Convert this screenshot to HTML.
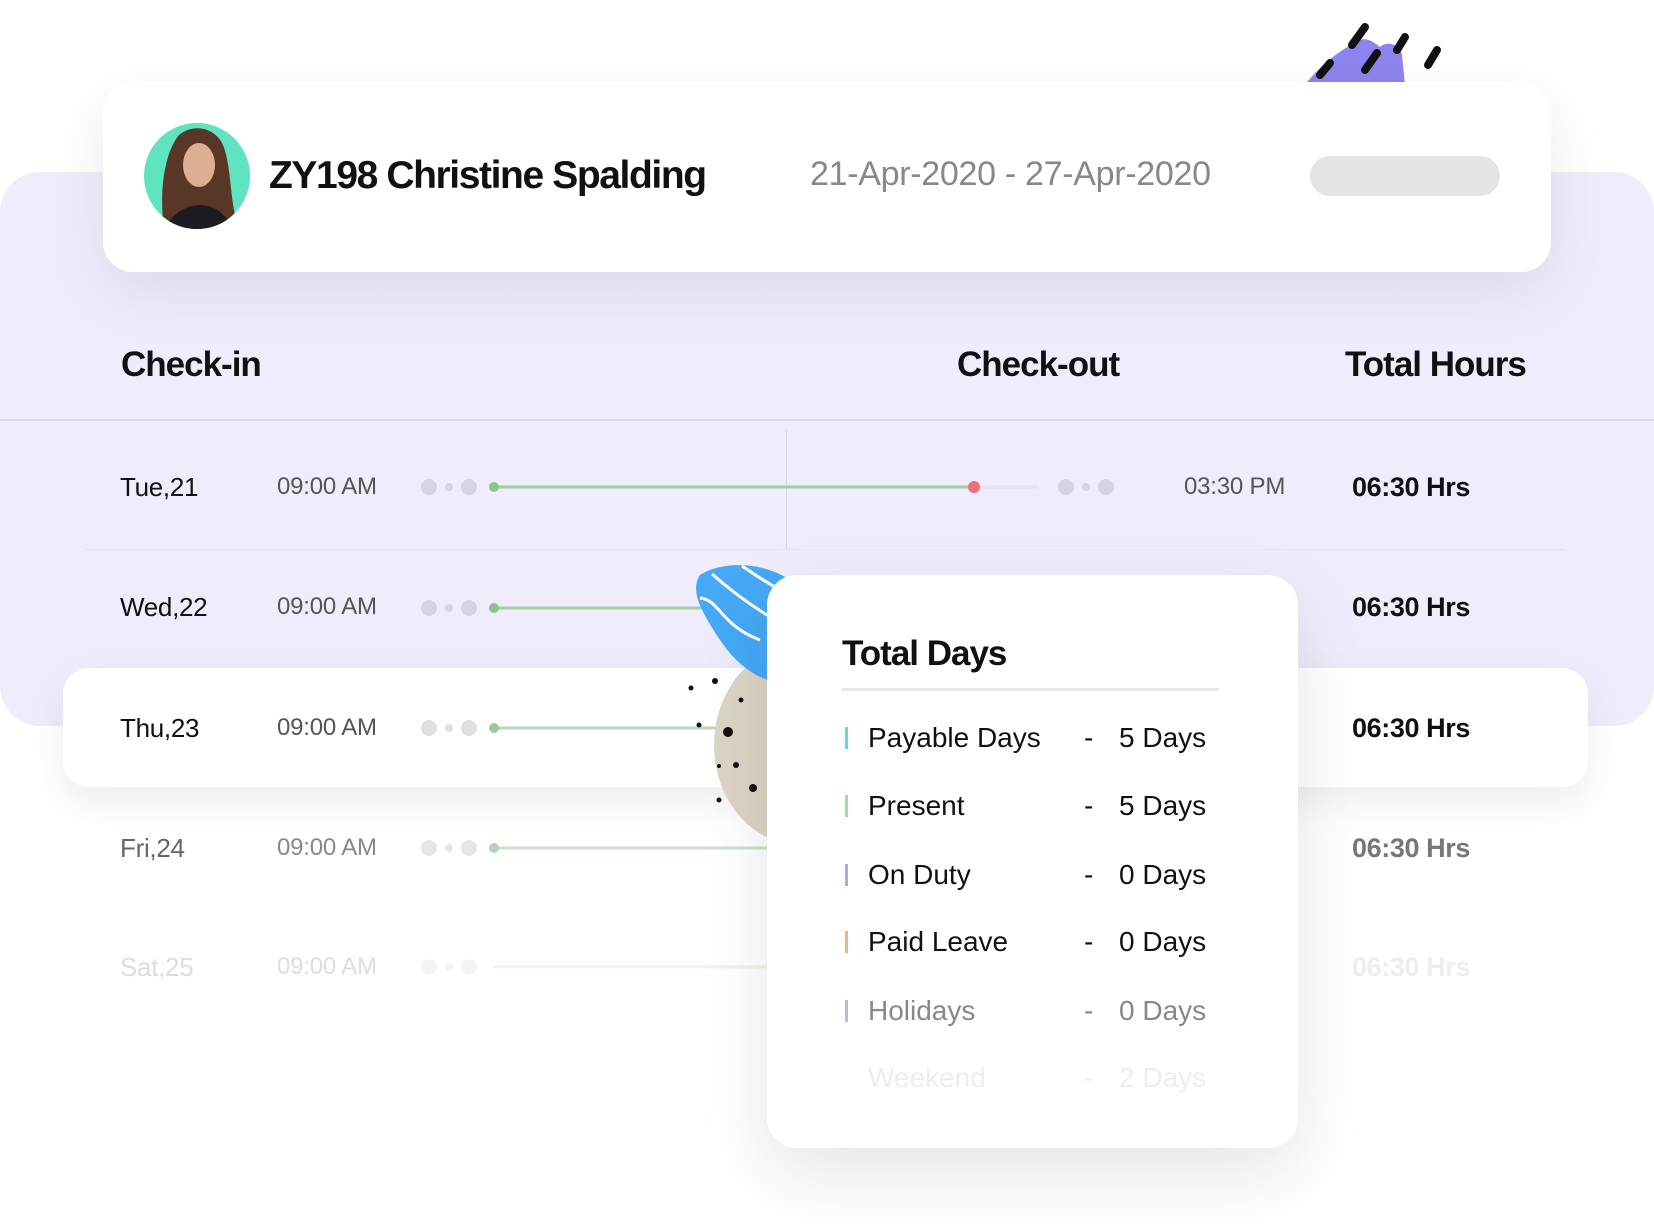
<!DOCTYPE html>
<html><head><meta charset="utf-8"><style>
*{margin:0;padding:0;box-sizing:border-box}
body{width:1654px;height:1231px;background:#fff;position:relative;overflow:hidden;font-family:"Liberation Sans",sans-serif;color:#111}
.a{position:absolute;white-space:nowrap}
.band{left:0;top:172px;width:1654px;height:554px;background:#efedfb;border-radius:40px}
.card{left:103px;top:82px;width:1448px;height:190px;background:#fff;border-radius:30px;box-shadow:0 20px 60px rgba(0,0,0,.08)}
.h{font-size:35px;font-weight:bold;letter-spacing:-1px;line-height:40px}
.day{font-size:26px;left:120px;line-height:30px;letter-spacing:-.3px}
.tm{font-size:24px;left:277px;color:#555;line-height:30px;letter-spacing:-.2px}
.hr{font-size:27px;left:1352px;font-weight:bold;line-height:30px;letter-spacing:-.4px}
.it{font-size:28px;line-height:34px;letter-spacing:0}
.bar{position:absolute;width:3px;height:22px;left:845px}
</style></head><body>
<div class="a band"></div>
<svg class="a" style="left:1290px;top:15px" width="200" height="70" viewBox="0 0 200 70">
<path d="M15 70 C30 50 50 35 70 25 C78 22 85 28 90 32 C96 26 110 28 112 40 L115 70 Z" fill="#8f83ef"/>
<g stroke="#111" stroke-width="8" stroke-linecap="round">
<line x1="62" y1="30" x2="75" y2="12"/><line x1="75" y1="55" x2="87" y2="38"/><line x1="30" y1="60" x2="40" y2="48"/>
<line x1="107" y1="35" x2="115" y2="22"/><line x1="138" y1="50" x2="147" y2="35"/></g></svg>
<div class="a card"></div>
<svg class="a" style="left:144px;top:123px" width="106" height="106" viewBox="0 0 106 106">
<defs><clipPath id="c"><circle cx="53" cy="53" r="53"/></clipPath></defs>
<g clip-path="url(#c)"><rect width="106" height="106" fill="#5fe3c0"/>
<path d="M20 106 C15 70 20 30 35 12 C50 0 70 5 78 20 C88 40 85 80 95 106Z" fill="#5a3626"/>
<ellipse cx="55" cy="42" rx="16" ry="22" fill="#dcae94"/>
<path d="M20 106 C30 88 45 82 55 82 C70 82 82 90 88 106Z" fill="#1d1b22"/></g></svg>
<div class="a" style="left:269px;top:153px;font-size:39px;font-weight:bold;letter-spacing:-1.4px;line-height:46px">ZY198 Christine Spalding</div>
<div class="a" style="left:810px;top:154px;font-size:34px;color:#888;letter-spacing:-.3px;line-height:40px">21-Apr-2020 - 27-Apr-2020</div>
<div class="a" style="left:1310px;top:156px;width:190px;height:40px;border-radius:20px;background:#e4e4e4"></div>

<div class="a h" style="left:121px;top:345px">Check-in</div>
<div class="a h" style="left:957px;top:345px">Check-out</div>
<div class="a h" style="left:1345px;top:345px">Total Hours</div>
<div class="a" style="left:0;top:419px;width:1654px;height:2px;background:#d9d7e8"></div>
<div class="a" style="left:786px;top:430px;width:1px;height:120px;background:#d9d7e8"></div>
<div class="a" style="left:85px;top:549px;width:1480px;height:1px;background:#e6e4f3"></div>

<div class="a" style="left:63px;top:668px;width:1525px;height:119px;background:#fff;border-radius:26px;box-shadow:0 15px 40px rgba(0,0,0,.07)"></div>

<div class="a day" style="top:472px">Tue,21</div><div class="a tm" style="top:472px">09:00 AM</div><div class="a tm" style="top:472px;left:1184px">03:30 PM</div><div class="a hr" style="top:472px">06:30 Hrs</div>
<div class="a day" style="top:592px">Wed,22</div><div class="a tm" style="top:592px">09:00 AM</div><div class="a hr" style="top:592px">06:30 Hrs</div>
<div class="a day" style="top:713px">Thu,23</div><div class="a tm" style="top:713px">09:00 AM</div><div class="a hr" style="top:713px">06:30 Hrs</div>
<div class="a day" style="top:833px;color:#666">Fri,24</div><div class="a tm" style="top:833px;color:#888">09:00 AM</div><div class="a hr" style="top:833px;color:#777">06:30 Hrs</div>
<div class="a day" style="top:952px;color:#ddd">Sat,25</div><div class="a tm" style="top:952px;color:#ddd">09:00 AM</div><div class="a hr" style="top:952px;color:#eee">06:30 Hrs</div>

<svg class="a" style="left:0;top:0" width="1654" height="1231">
<circle cx="429" cy="487" r="8" fill="#d6d4e2"/><circle cx="449" cy="487" r="4" fill="#d6d4e2"/><circle cx="469" cy="487" r="8" fill="#d6d4e2"/>
<line x1="494" y1="487" x2="974" y2="487" stroke="#a3cfa2" stroke-width="3"/><circle cx="494" cy="487" r="5" fill="#8fc28e"/>
<line x1="974" y1="487" x2="1039" y2="487" stroke="#e6e4f0" stroke-width="3"/><circle cx="974" cy="487" r="6" fill="#ee6f7c"/>
<circle cx="1066" cy="487" r="8" fill="#d6d4e2"/><circle cx="1086" cy="487" r="4" fill="#d6d4e2"/><circle cx="1106" cy="487" r="8" fill="#d6d4e2"/>
<g fill="#d6d4e2"><circle cx="429" cy="608" r="8"/><circle cx="449" cy="608" r="4"/><circle cx="469" cy="608" r="8"/></g>
<line x1="494" y1="608" x2="720" y2="608" stroke="#a3cfa2" stroke-width="3"/><circle cx="494" cy="608" r="5" fill="#8fc28e"/>
<g fill="#e0e0e0"><circle cx="429" cy="728" r="8"/><circle cx="449" cy="728" r="4"/><circle cx="469" cy="728" r="8"/></g>
<line x1="494" y1="728" x2="720" y2="728" stroke="#b6dab5" stroke-width="3"/><circle cx="494" cy="728" r="5" fill="#9ccb9b"/>
<g fill="#e6e6e6"><circle cx="429" cy="848" r="8"/><circle cx="449" cy="848" r="4"/><circle cx="469" cy="848" r="8"/></g>
<line x1="494" y1="848" x2="770" y2="848" stroke="#c8e3c7" stroke-width="3"/><circle cx="494" cy="848" r="5" fill="#b0d6af"/>
<g fill="#f4f4f4"><circle cx="429" cy="967" r="8"/><circle cx="449" cy="967" r="4"/><circle cx="469" cy="967" r="8"/></g>
<line x1="494" y1="967" x2="770" y2="967" stroke="#ebf5ea" stroke-width="3"/>
<ellipse cx="800" cy="745" rx="86" ry="100" fill="#dcd5c6"/>
<g fill="#111"><circle cx="715" cy="681" r="3"/><circle cx="691" cy="688" r="2.5"/><circle cx="741" cy="700" r="2.5"/><circle cx="728" cy="732" r="5"/><circle cx="699" cy="725" r="2.5"/><circle cx="736" cy="765" r="3"/><circle cx="753" cy="788" r="4"/><circle cx="719" cy="766" r="2"/><circle cx="719" cy="800" r="2.5"/></g>
<path d="M700 575 C720 562 760 560 790 580 L800 680 C770 690 740 670 720 640 C700 610 690 590 700 575Z" fill="#45a9f5"/>
<g stroke="#fff" stroke-width="3" fill="none"><path d="M700 598 C720 600 720 625 760 640"/><path d="M712 574 C730 590 750 605 775 620"/><path d="M742 566 C755 575 770 585 790 595"/></g>
</svg>

<div class="a" style="left:767px;top:575px;width:531px;height:573px;background:#fff;border-radius:30px;box-shadow:0 25px 70px rgba(0,0,0,.1)"></div>
<div class="a" style="left:842px;top:633px;font-size:35px;font-weight:bold;letter-spacing:-1px;line-height:42px">Total Days</div>
<div class="a" style="left:842px;top:688px;width:377px;height:3px;background:#e8e8e8"></div>

<div class="bar" style="top:727px;background:#5fd8f3"></div>
<div class="a it" style="left:868px;top:721px">Payable Days</div><div class="a it" style="left:1084px;top:721px">-</div><div class="a it" style="left:1119px;top:721px">5 Days</div>
<div class="bar" style="top:795px;background:#9ddf9a"></div>
<div class="a it" style="left:868px;top:789px">Present</div><div class="a it" style="left:1084px;top:789px">-</div><div class="a it" style="left:1119px;top:789px">5 Days</div>
<div class="bar" style="top:864px;background:#b3a5ea"></div>
<div class="a it" style="left:868px;top:858px">On Duty</div><div class="a it" style="left:1084px;top:858px">-</div><div class="a it" style="left:1119px;top:858px">0 Days</div>
<div class="bar" style="top:931px;background:#f6b47c"></div>
<div class="a it" style="left:868px;top:925px">Paid Leave</div><div class="a it" style="left:1084px;top:925px">-</div><div class="a it" style="left:1119px;top:925px">0 Days</div>
<div class="bar" style="top:1000px;background:#c1b5ef"></div>
<div class="a it" style="left:868px;top:994px;color:#888">Holidays</div><div class="a it" style="left:1084px;top:994px;color:#888">-</div><div class="a it" style="left:1119px;top:994px;color:#888">0 Days</div>
<div class="a it" style="left:868px;top:1061px;color:#eee">Weekend</div><div class="a it" style="left:1084px;top:1061px;color:#eee">-</div><div class="a it" style="left:1119px;top:1061px;color:#eee">2 Days</div>
</body></html>
